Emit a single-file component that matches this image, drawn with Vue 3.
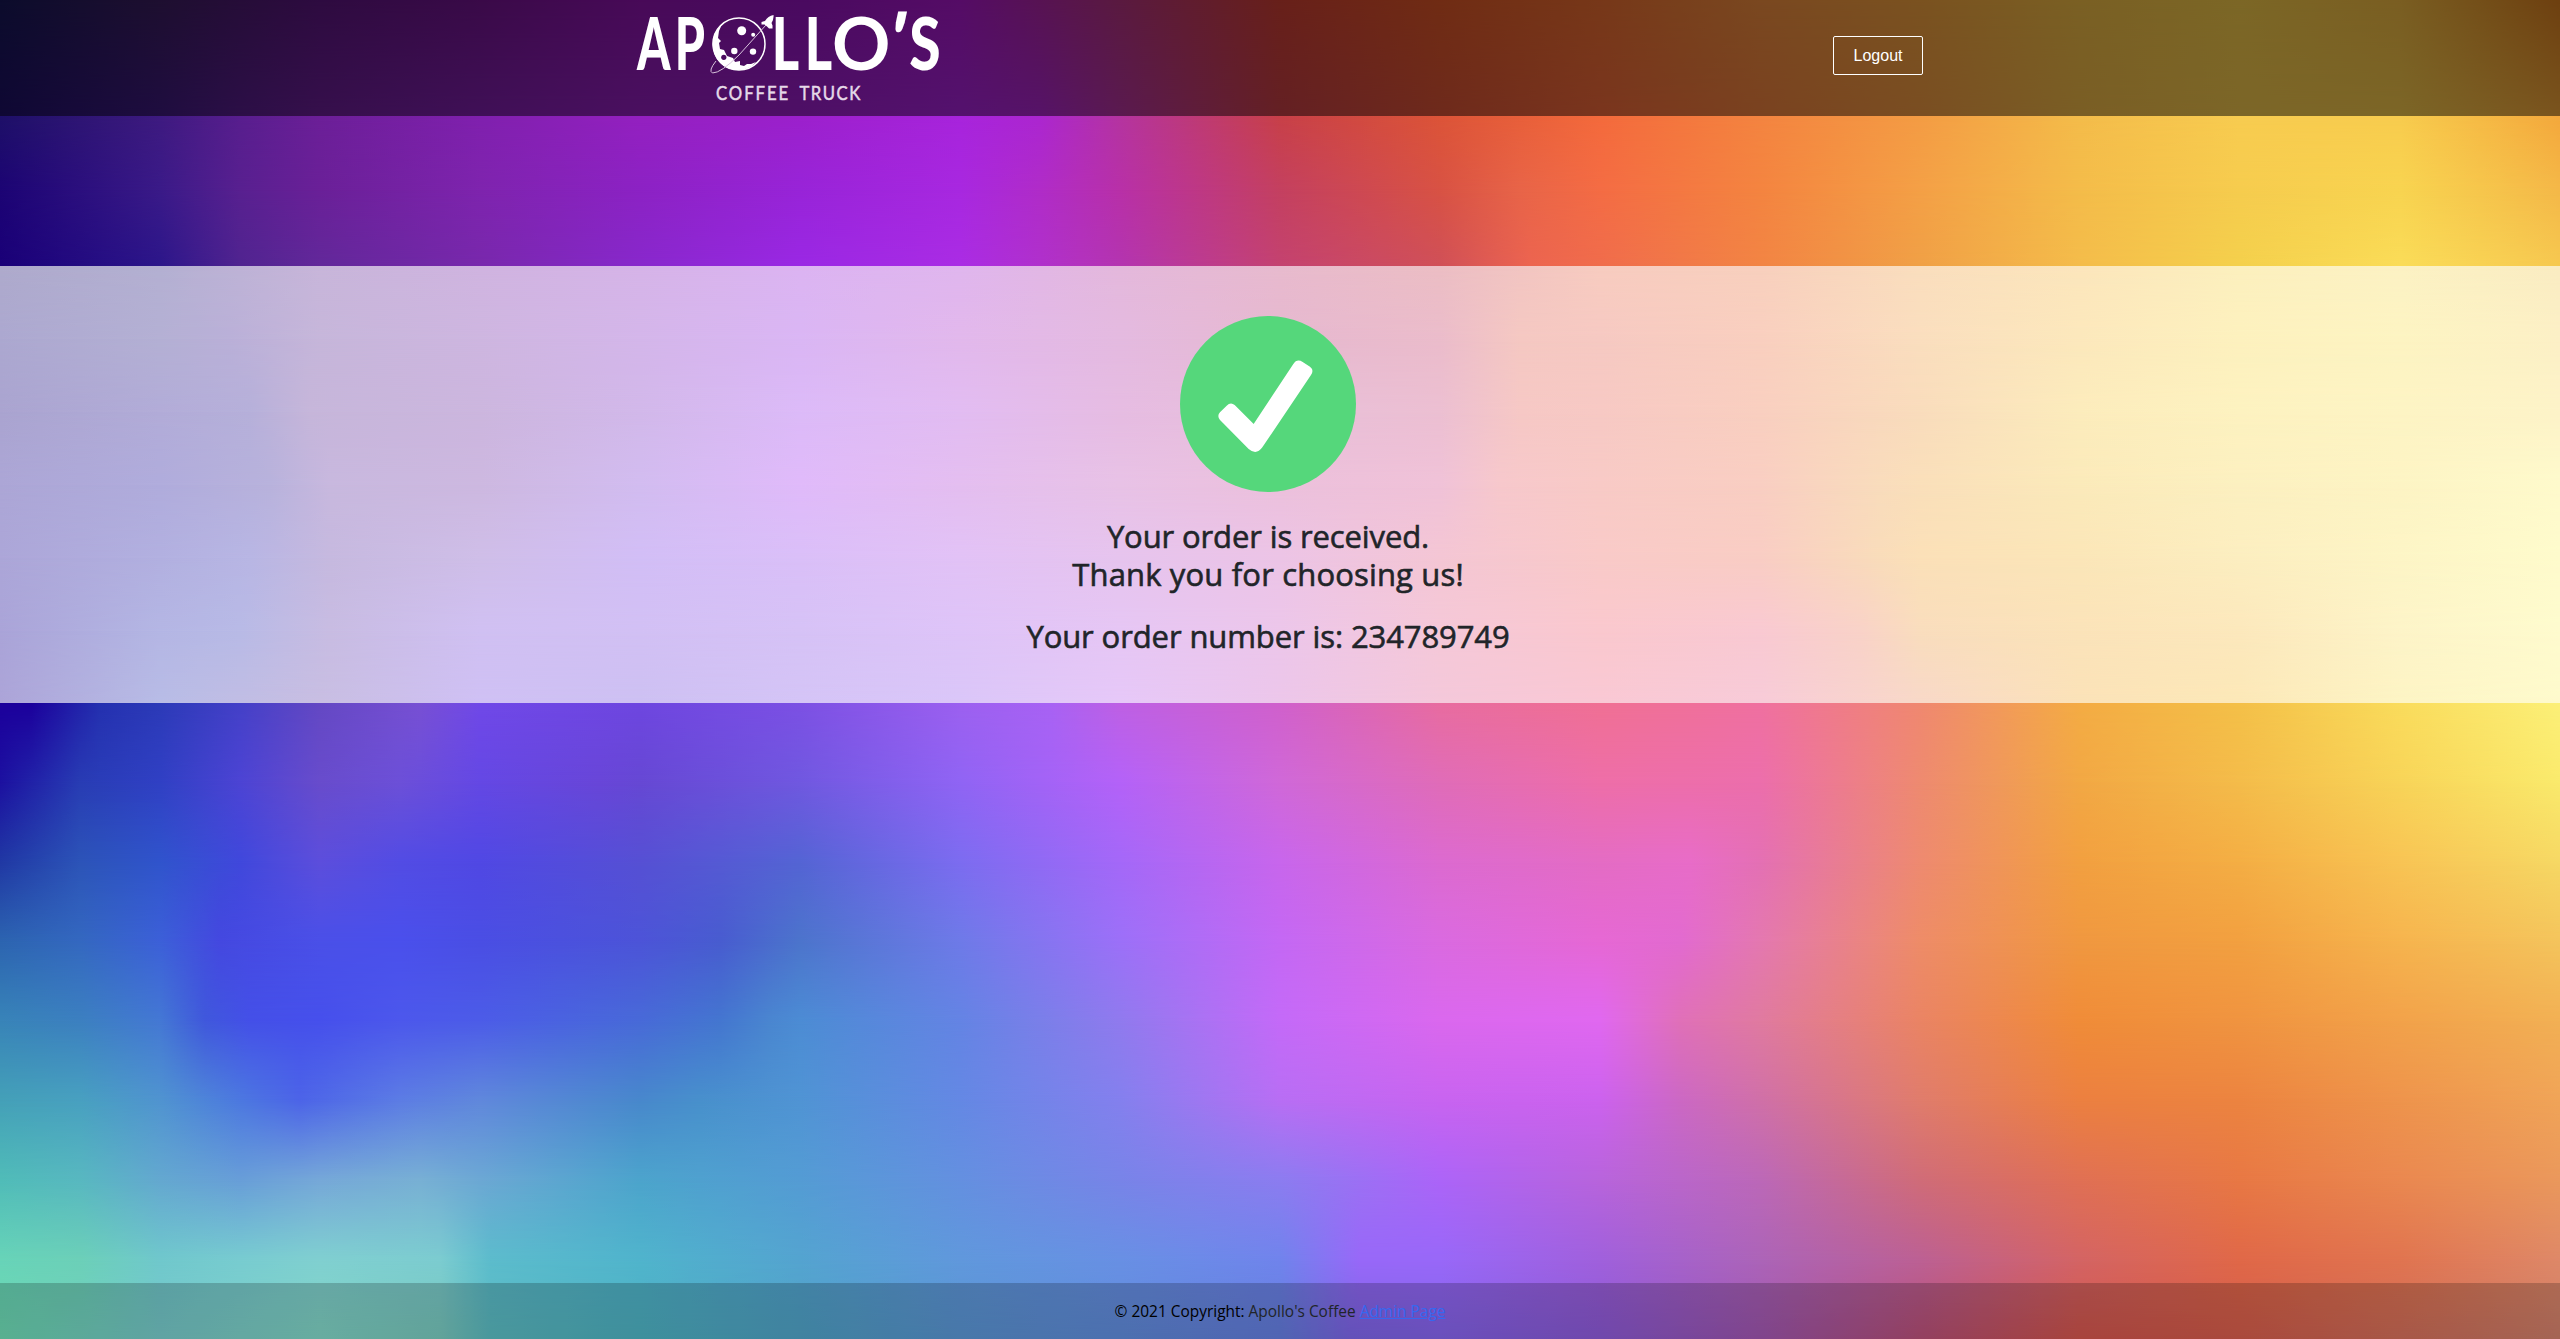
<script setup>
// Colour mesh: each row holds colours every 160px for one height of the page;
// "colour@x" adds a stop at its own position.
const rows = [
  [0, '181858 3c1e60 5c1680 741490 9014b0 9414c0 aa18cc b43480 d04034 e05828 ee7032 f49040 f4a440 f4c048 f8ce4c f4bc44 dc8020'],
  [116, '1e1068 3e1a80 581e8e@240 6c1f98 8020ae 9420c0 9c20cc a824dc ac26d0@1040 b534a0 c84048 dc5438 f46a3c f48440 f49c44 f4bc4a f8cc50 f8cc4e f4a83c'],
  [190, '1c0474 3a1a88 582090@240 6a2098 7e24ae 8c22c4 9824d8 a828e0 b02cc8@1040 b830a8 c44060 d85244 e86448@1520 f46c44 f48440 f4a046 f4bc4a f6cc4e f8d450 f4b848'],
  [266, '1a0078 2c168a 502490@240 62289a 7828ac 8828cc 9a28e4 aa2ce4 b030cc@1040 b434b0 c44270 d05058 ec6450@1530 f06c4c f28444 f0a046 f4bc4a f4d04c fadc58 f6c850'],
  [266, 'aeaacc b4b0d2 c8b6da d0b4e0 d6b4e8 dcb4f2 e0b6ee e4b8dc e8bace ecbec4 f8ccc0 f8d0be fadebe fce6bc fcf0be fcf2c4 faecc2'],
  [339, 'aca8d0 b4b0d4 bab0d8@230 c6b6da ceb6e0 d4b6ea dab6f4 e2b8ec e4bae0 e6b8d0 ebbccb f5c8c2@1520 f6c9c2 f9cfbf fadebe fce8bc fdf1be fdf4c2 fcf0c6'],
  [412, 'aaa4d0 b2acd8 b6b0da@250 c6b6da@310 ccb6de d2b8ea dcbaf8 e2bcf2 e6bce2 e8bfda ecbfd2@1440 f6c8c5@1520 f7c9c4 f9cfc0 f9dcbc fcecbc fdf2c0 fdf4c4 fdf3c8'],
  [485, 'aca6d6 b0acdc b8b2dc@270 c8b8de@330 cdb8e0 d2bcf0 e0bafa e4bef0 e8c2e6 ecc0dc f0c2d8@1440 f7c8cc@1500 f8cac6 f9cec2 f9dcbc@1880 fadfba fbeaba fcf0c0 fdf4c4 fefacc'],
  [558, 'aca6d8 b2b0e0 b8b6e4@250 c6b9df@330 cfbee8 d2bef6 dabff8 e2c2f6 e6c4ee ecc4e6 f4c6d4 f9cac8 f9cdc4 f9dcba@1880 fbe0b8 fbe6b8 fceec0 fdf5c6 fefbcc'],
  [631, 'aaa4d8 b4b6e4 b8bae6@240 c8bce2@330 d0c0f2 d2c0f4 d6c2f6 dec4f8 e6c6f4 ecc6ea f5c8d8 fac8ce f9c9d2 f9d2c8@1860 f9ddbd fbe3b9 fce8bc fdf4c8 fefbce'],
  [703, 'aca4d8 b8bce6 c8bee2 cfc0f4 cdc0f2 d4c4f6 dac6f8 e6c8f8 ecc6ea f4c8da f9c8d4 f7cbd8 f8d8c8 fbe2b8 fce8b8 fdf4c4 fefacc'],
  [703, '1c009c 1c009c@30 2430b0@100 2c3ab8 4440c8@240 6448c4 7850d4@420 7048e8 6e46e0 7c50e4 9c60f0 a862f4@1050 be60e4 d060cc e86ca0 f07094 f070a0 f08870 f4ac44 f4c048 fadc5c fcf078'],
  [782, '1c10a0 283cb4@80 3040c4 4c44d4@240 684ccc 6c50d8@400 6448e4 6846d8@600 6648d4 7058e0 9064f4 b462f8 d068d8 e06cb8 ee6ea8 ec6eac ee8a70 f2a844 f4bc4a f8d458 faea6c'],
  [862, '2038a4 2c54b8@80 3054cc 4048dc@240 5c4edc 524ce4@400 5048e4 5650d4 5464d4 7c6cf0 a468f8 c866ec dc6ad0 e46cc4 e86cc8@1690 e470b4 ee8a70 f2a040 f4ae44 f8c454 f6d864'],
  [941, '2c64b0 3468c0@80 3c60d8 4448e0@220 4a50e8 4a50ec@400 4a4ee4 4c54d8 485cd0@720 4c74cc 6e7ae8 9c70f8 c468f4 da6ae0 e668d4 e26ad0@1680 e478b0 ee8c68 f09840 f2a040 f6b44e f4c45c'],
  [1021, '3884b8 3c80c0@80 4478d4 4058dc@205 4450e8@250 4650ec 4c58ec@400 4c5ce8 486ad8 4476d0@720 4a86d0@770 4c8cd4 6484e4 907aee c46af8 da68ee e068f0 e070b8@1680 e07aa0 ea8464 f08c38 f09440 f2a24a f2b054'],
  [1100, '44a0b8 48a0c0@80 5094d0 4c78e0@240 4c64e8@300 5c7ce4@400 6088dc 4888cc 4890cc@700 5094d4 6488e4 8480ee b86ef4 c864f0 cc62ee cc68c4@1680 d070a8 e07c6c ec8040 ec8440 ee944c f0a458'],
  [1180, '50bcb8 58b8c0@80 64a8d0 689ed8@240 76a8d8 78b0d4@420 6ca8d4 4ca4cc 549cd4 6490e0 7884e8 8c7cf0 ac64f8 b864dc bc68b8 d06c78 e07054 e87844 ea8850 ea985c'],
  [1260, '68d4b8 6cd0b8@80 70c8cc 78ccd0@240 80d0d0 7cccd0@440 5cbccc@490 50b4cc 54a4d0 6098dc 6890e4 7084ec 9868f8@1360 9868f8 a060dc ac64b8 bc6094 d46464 e06848 e07450 de8868'],
  [1339, '6edcb4 78cccc 82d8c8 7accc0@440 5cbec4@490 4eb4c4 50a4c8 5a96d4 608cdc 647ee0 7c66e8@1350 8464ec 8c5ad8 a056b0 b85078 d2554c d45c4c d26e5a ce7e6a'],
]

const gradient = (colors) => {
  let column = 0
  const stops = colors.split(' ').map((token) => {
    const [color, at] = token.split('@')
    if (at) {
      const x = Number(at)
      // A stop that sits on or within 20px of a column stands in for it.
      if (Math.abs(x - column * 160) <= 20) column++
      return `#${color} ${x}px`
    }
    return `#${color} ${column++ * 160}px`
  })
  return `linear-gradient(90deg, ${stops.join(', ')})`
}

const bands = rows
  .slice(1)
  .map(([y, colors], i) => ({
    height: `${y - rows[i][0]}px`,
    from: gradient(rows[i][1]),
    to: gradient(colors),
  }))
  .filter((b) => b.height !== '0px')

const orderNumber = 234789749
</script>

<template>
  <div class="page">
    <div class="mesh" aria-hidden="true">
      <div v-for="(b, i) in bands" :key="i" class="band" :style="{ height: b.height, background: b.from }">
        <div class="fade" :style="{ background: b.to }"></div>
      </div>
    </div>

    <header class="navbar">
      <div class="nav-inner">
        <svg class="logo" viewBox="630 0 320 116" width="320" height="116" role="img" aria-label="Apollo's Coffee Truck">
          <g class="brand">
            <text transform="translate(637 70.3) scale(.655 1)">A</text>
            <text transform="translate(674.8 70.3) scale(.66 1)">P</text>
            <text transform="translate(771.8 70.3) scale(.72 1)">L</text>
            <text transform="translate(804.8 70.3) scale(.72 1)">L</text>
            <text transform="translate(832 70.3) scale(.99 1)" font-weight="700">O</text>
            <text transform="translate(883 67) skewX(-12) scale(1 1.05)">'</text>
            <text transform="translate(909.2 70.3) scale(.78 1)">S</text>
          </g>
          <g class="tagline">
            <text transform="translate(716 100) scale(.88 1)" textLength="82" lengthAdjust="spacing">COFFEE</text>
            <text transform="translate(799.5 100) scale(.88 1)" textLength="69" lengthAdjust="spacing">TRUCK</text>
          </g>
          <circle cx="739" cy="44" r="26" fill="none" stroke="#fff" stroke-width="1.5" />
          <path fill="#fff" d="M722 24 Q712 33 712.500 45 Q714 61 727 68 Q740 73 752 66 L756 62 L751 64 L747 64 L744 66 L740 65 L740 61 L735 62 L733 58 L727 56 L724 50 L720 49 L719 43 L721 41 L718 38 L719 31 Z" />
          <circle cx="723.800" cy="57.300" r="2.600" fill="#4a0b5e" />
          <g fill="#fff">
            <circle cx="741.700" cy="30.800" r="4.500" />
            <circle cx="753.200" cy="34.800" r="2" />
            <circle cx="734.300" cy="51" r="3.200" />
            <circle cx="753" cy="51.600" r="3.200" />
            <path d="M773.500 15 Q768 16 765 21 L761.500 22 L761.500 24.500 L764.500 24.500 L767 26.500 L769 28.500 L772.500 28.500 L772.500 25.500 L771.500 23 Q774 19 773.500 15 Z" />
          </g>
          <path d="M766 25 L739 55 Q721 73 712.500 73 Q708 71 716 61" fill="none" stroke="#d8c4dc" stroke-width="1" />
        </svg>
        <button class="logout" type="button">Logout</button>
      </div>
    </header>

    <main class="confirmation">
      <svg class="check" viewBox="0 0 528 528" width="176" height="176" aria-hidden="true">
        <circle cx="264" cy="264" r="264" fill="#55d77b" />
        <path
          transform="translate(-60 -48)"
          fill="#fff"
          d="M281 372 L400 192 Q411 175 428 186 L450 200 Q463 210 453 225 L307 442 Q289 467 266 447 L180 360 Q170 348 180 337 L200 317 Q212 305 224 315 Z"
        />
      </svg>
      <h2 class="message">
        <span class="received">Your order is received.</span><br /><span class="thanks">Thank you for choosing us!</span>
      </h2>
      <h2 class="number">Your order number is: {{ orderNumber }}</h2>
    </main>

    <footer class="footer">
      <span>© 2021 Copyright: <a class="brand-link">Apollo's Coffee</a> <a class="admin" href="#">Admin Page</a></span>
    </footer>
  </div>
</template>

<style>
body {
  margin: 0;
}
</style>

<style scoped>
.page {
  position: relative;
  display: flex;
  flex-direction: column;
  height: 1339px;
  overflow: hidden;
  font-family: "Segoe UI", "Open Sans", "Noto Sans", sans-serif;
  color: #212529;
}

.mesh {
  position: absolute;
  inset: 0;
  z-index: -1;
}

.fade {
  height: 100%;
  -webkit-mask-image: linear-gradient(transparent, #000);
  mask-image: linear-gradient(transparent, #000);
}

.navbar {
  height: 116px;
  background: rgba(0, 0, 0, 0.5);
}

.nav-inner {
  display: flex;
  align-items: flex-start;
  justify-content: space-between;
  width: 1293px;
  margin-left: 630px;
}

.logo {
  overflow: visible;
}

.brand {
  font-family: Lato, sans-serif;
  font-size: 73px;
  font-weight: 900;
  fill: #fff;
}

.tagline {
  font-family: Lato, sans-serif;
  font-size: 19px;
  font-weight: 400;
  fill: #e6dae9;
  stroke: #e6dae9;
  stroke-width: 0.5px;
}

.logout {
  box-sizing: border-box;
  width: 90px;
  height: 39px;
  margin-top: 36px;
  padding: 0;
  border: 1px solid #fff;
  border-radius: 2px;
  background: transparent;
  color: #fff;
  font: 16px "Liberation Sans", Arial, sans-serif;
}

.confirmation {
  box-sizing: border-box;
  display: flex;
  flex-direction: column;
  align-items: center;
  height: 437px;
  margin-top: 150px;
  padding: 50px 24px 0 0;
  text-align: center;
}

.check {
  display: block;
}

.message,
.number {
  margin: 0;
  font-size: 31px;
  font-weight: 500;
  line-height: 38.4px;
  white-space: nowrap;
  -webkit-text-stroke: 0.6px #212529;
}

.message {
  margin-top: 25px;
}

.received {
  letter-spacing: -0.12px;
}

.thanks {
  letter-spacing: 0.16px;
}

.number {
  margin-top: 23px;
  letter-spacing: -0.1px;
}

.footer {
  display: flex;
  align-items: center;
  justify-content: center;
  height: 56px;
  margin-top: auto;
  background: rgba(0, 0, 0, 0.2);
  color: #000;
  font-size: 15.45px;
  line-height: 24px;
}

.brand-link {
  color: #212529;
}

.admin {
  color: #3568f0;
  text-decoration: underline;
}
</style>
